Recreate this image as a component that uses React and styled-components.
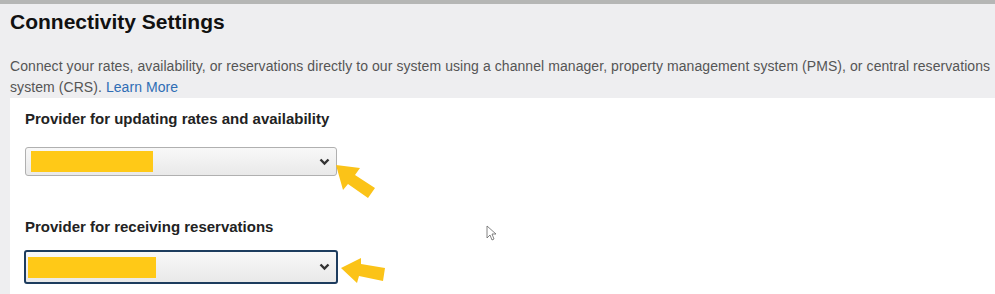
import styled, { createGlobalStyle } from 'styled-components';

const Global = createGlobalStyle`
  html, body {
    margin: 0;
    padding: 0;
    background: #eeeef0;
    font-family: "Liberation Sans", Arial, sans-serif;
  }
`;

const Page = styled.div`
  position: relative;
  width: 995px;
  height: 294px;
  overflow: hidden;
  background: #eeeef0;
  border-top: 4px solid #b5b6b5;
  box-sizing: border-box;
`;

const Header = styled.div`
  padding: 0 10px;
`;

const Title = styled.h1`
  margin: 0;
  padding-top: 6px;
  font-size: 21px;
  font-weight: bold;
  color: #111;
  line-height: 24px;
`;

const Intro = styled.p`
  margin: 22px 0 0;
  font-size: 14px;
  line-height: 21px;
  letter-spacing: 0.07px;
  color: #555;
  width: 985px;
`;

const Link = styled.a`
  color: #2f6db5;
  text-decoration: none;
`;

const Panel = styled.div`
  margin-left: 10px;
  background: #fff;
  padding: 12px 15px 20px;
  height: 200px;
  box-sizing: border-box;
`;

const Field = styled.div`
  display: flex;
  flex-direction: column;
  margin-bottom: ${(p) => p.gap || 0}px;
`;

const Label = styled.label`
  font-size: 15px;
  line-height: 18px;
  font-weight: bold;
  color: #222;
  margin-bottom: 19px;
`;

const Select = styled.div`
  display: flex;
  align-items: center;
  justify-content: space-between;
  box-sizing: border-box;
  width: ${(p) => (p.focused ? 314 : 312)}px;
  height: ${(p) => (p.focused ? 34 : 29)}px;
  padding: 0 6px 0 ${(p) => (p.focused ? 2 : 5)}px;
  margin: ${(p) => (p.focused ? '-5px 0 0 -1px' : '0')};
  border: ${(p) => (p.focused ? '2px solid #1d3c5e' : '1px solid #b0b0b0')};
  border-radius: 3px;
  background: linear-gradient(#f8f8f8, #e9e9e9);
`;

const Redacted = styled.div`
  width: ${(p) => p.w}px;
  height: 21px;
  background: #ffc917;
`;

const Chevron = () => (
  <svg width="11" height="8" viewBox="0 0 11 8">
    <path d="M1.5 1.5 L5.5 5.5 L9.5 1.5" fill="none" stroke="#333" strokeWidth="2.4" />
  </svg>
);

const Overlay = styled.svg`
  position: absolute;
  left: 0;
  top: 0;
  pointer-events: none;
`;

const Arrow = ({ d }) => <path d={d} fill="#fbc318" />;

function App() {
  return (
    <Page>
      <Global />
      <Header>
        <Title>Connectivity Settings</Title>
        <Intro>
          Connect your rates, availability, or reservations directly to our system using a channel manager, property management system (PMS), or central reservations system (CRS). <Link href="#">Learn More</Link>
        </Intro>
      </Header>
      <Panel>
        <Field gap={42}>
          <Label>Provider for updating rates and availability</Label>
          <Select>
            <Redacted w={122} />
            <Chevron />
          </Select>
        </Field>
        <Field>
          <Label>Provider for receiving reservations</Label>
          <Select focused>
            <Redacted w={128} />
            <Chevron />
          </Select>
        </Field>
      </Panel>
      <Overlay width="995" height="294">
        <Arrow d="M336 161 L360 164 L355 171 L375 184 L368 194 L348 180 L343 186 Z" />
        <Arrow d="M341 264 L361 254 L361 260 L385 264 L383 277 L359 272 L357 279 Z" />
        <path d="M487 222 L487 234 L490 231 L492 236 L494 235 L492 230 L496 230 Z" fill="#fff" stroke="#666" strokeWidth="0.8" />
      </Overlay>
    </Page>
  );
}

export default App;
